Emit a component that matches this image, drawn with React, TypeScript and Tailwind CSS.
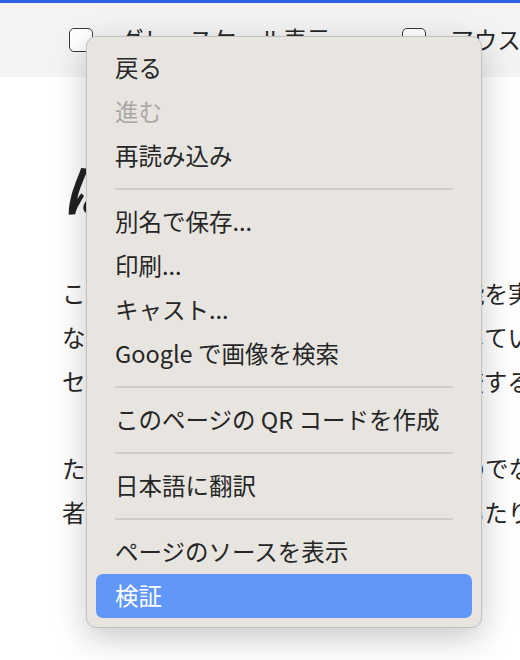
import * as React from "react";

type MenuEntry = { label: string; disabled?: boolean; active?: boolean } | "sep";

const menuItems: MenuEntry[] = [
  { label: "戻る" },
  { label: "進む", disabled: true },
  { label: "再読み込み" },
  "sep",
  { label: "別名で保存..." },
  { label: "印刷..." },
  { label: "キャスト..." },
  { label: "Google で画像を検索" },
  "sep",
  { label: "このページの QR コードを作成" },
  "sep",
  { label: "日本語に翻訳" },
  "sep",
  { label: "ページのソースを表示" },
  { label: "検証", active: true },
];

const para1 = [
  "このページでは色覚や視力に関する機能を実際に体験できます",
  "などの見え方を、ブラウザの上で再現しています。",
  "セクションごとに表示を切り替えて比較することができます",
];

const para2 = [
  "ただし、表示は医学的根拠に基づくものでなく、",
  "者の視点を理解するため参考として用いたりしてください",
];

const Checkbox = () => (
  <span className="block w-6 h-6 shrink-0 rounded-[5px] border-[1.5px] border-[#3a3a3a] bg-white" />
);

const ContextMenu = () => (
  <div className="absolute left-[86px] top-[36px] w-[396px] rounded-[10px] border border-[#c4c0bc] bg-[#e8e5e1] p-[9px] shadow-[0_10px_32px_rgba(0,0,0,0.22)]">
    {menuItems.map((item, i) =>
      item === "sep" ? (
        <div key={i} className="h-[22px] flex items-center px-[19px]">
          <div className="h-[2px] w-full bg-[#cfcbc7]" />
        </div>
      ) : (
        <div
          key={i}
          className={
            item.active
              ? "h-[44px] flex items-center px-[19px] rounded-[7px] bg-[#6097f8] text-white"
              : item.disabled
              ? "h-[44px] flex items-center px-[19px] text-[#aba8a4]"
              : "h-[44px] flex items-center px-[19px] text-[#262626]"
          }
        >
          {item.label}
        </div>
      )
    )}
  </div>
);

export default function App() {
  return (
    <div
      className="relative w-[520px] h-[660px] overflow-hidden bg-white text-[23.5px] leading-none text-[#262626]"
      style={{ fontFamily: '"Noto Sans CJK JP", "Noto Sans", sans-serif' }}
    >
      {/* toolbar */}
      <div className="h-[77px] border-t-[3px] border-[#2f5fe3] bg-[#f4f3f4] flex items-center pl-[69px] whitespace-nowrap">
        <Checkbox />
        <span className="ml-[27px]">グレースケール表示</span>
        <span className="ml-[72px]">
          <Checkbox />
        </span>
        <span className="ml-[24px]">アウスタイル表示</span>
      </div>

      {/* page content */}
      <div className="pl-[62px] whitespace-nowrap">
        <h1 className="mt-[77px] text-[56px] leading-[67px] font-bold italic text-[#222]">
          はじめに
        </h1>
        <div className="mt-[50px] leading-[44px]">
          {para1.map((l, i) => (
            <div key={i}>{l}</div>
          ))}
        </div>
        <div className="mt-[43px] leading-[44px]">
          {para2.map((l, i) => (
            <div key={i}>{l}</div>
          ))}
        </div>
      </div>

      <ContextMenu />
    </div>
  );
}
